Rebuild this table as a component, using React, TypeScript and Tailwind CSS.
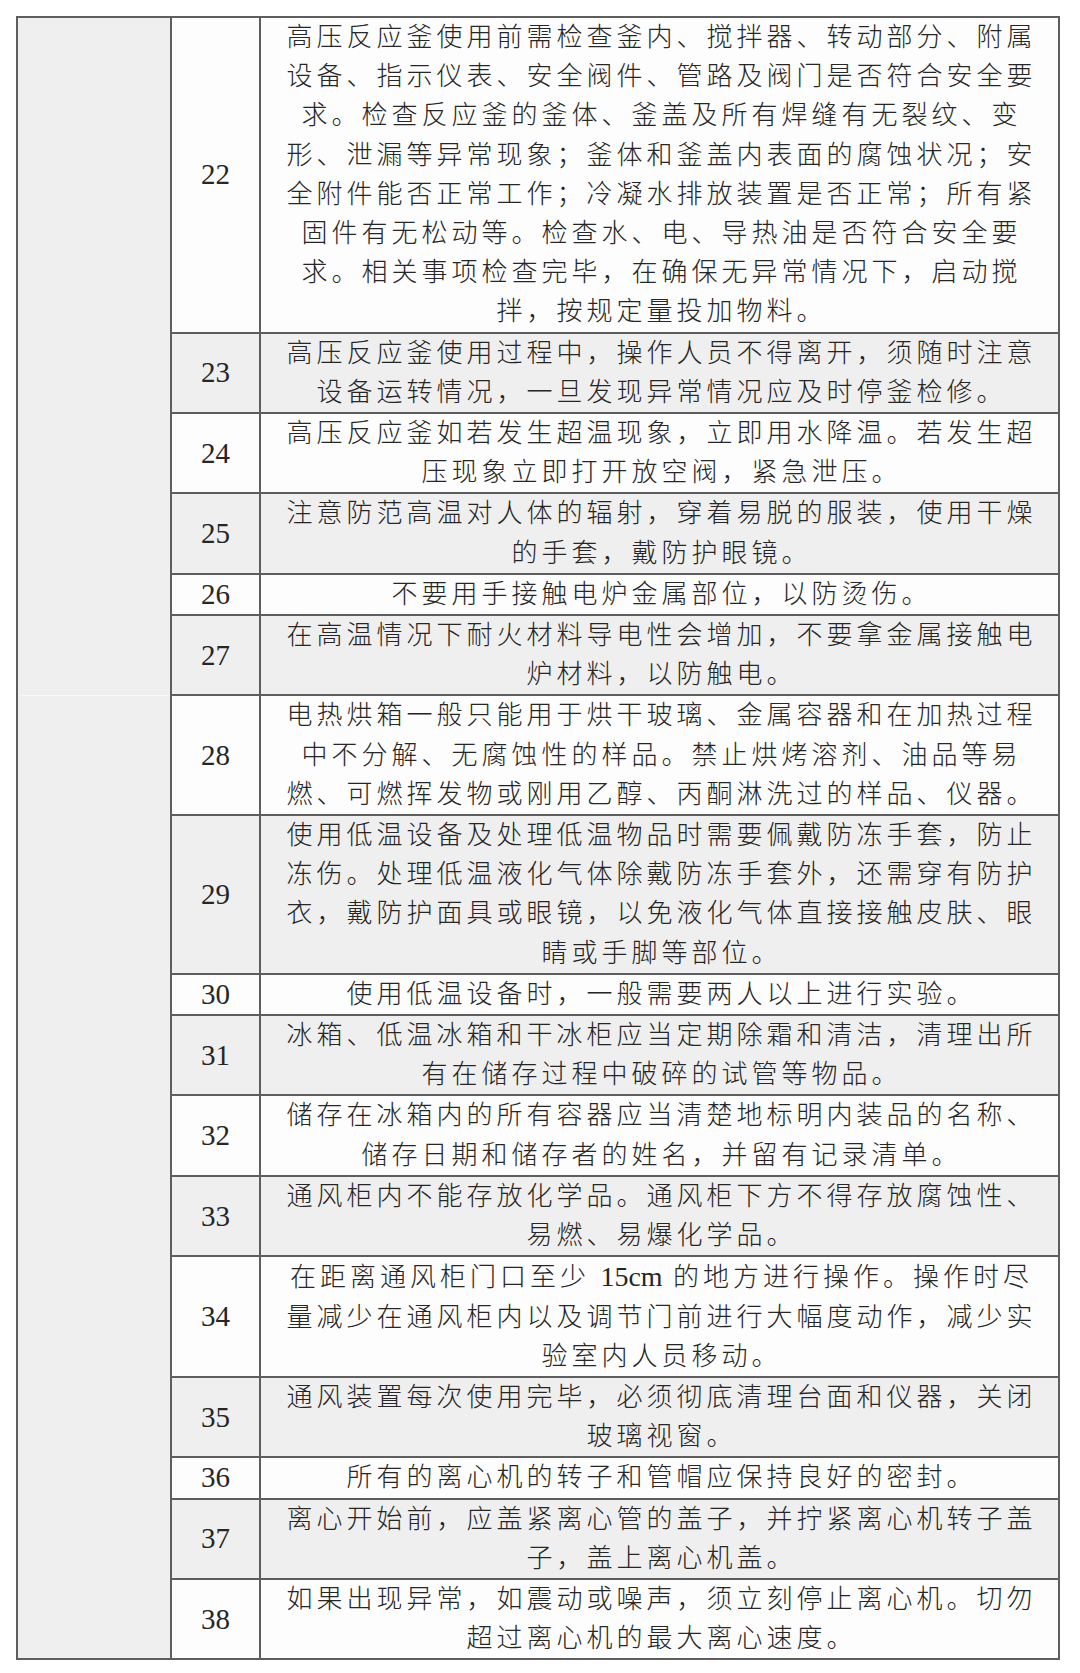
import React from "react";

type Row = {
  no: number;
  lines: React.ReactNode[];
};

const cm = (
  <>
    在距离通风柜门口至少 <span className="text-[28px] tracking-normal">15cm</span> 的地方进行操作。操作时尽
  </>
);

const rows: Row[] = [
  {
    no: 22,
    lines: [
      "高压反应釜使用前需检查釜内、搅拌器、转动部分、附属",
      "设备、指示仪表、安全阀件、管路及阀门是否符合安全要",
      "求。检查反应釜的釜体、釜盖及所有焊缝有无裂纹、变",
      "形、泄漏等异常现象；釜体和釜盖内表面的腐蚀状况；安",
      "全附件能否正常工作；冷凝水排放装置是否正常；所有紧",
      "固件有无松动等。检查水、电、导热油是否符合安全要",
      "求。相关事项检查完毕，在确保无异常情况下，启动搅",
      "拌，按规定量投加物料。",
    ],
  },
  {
    no: 23,
    lines: [
      "高压反应釜使用过程中，操作人员不得离开，须随时注意",
      "设备运转情况，一旦发现异常情况应及时停釜检修。",
    ],
  },
  {
    no: 24,
    lines: [
      "高压反应釜如若发生超温现象，立即用水降温。若发生超",
      "压现象立即打开放空阀，紧急泄压。",
    ],
  },
  {
    no: 25,
    lines: [
      "注意防范高温对人体的辐射，穿着易脱的服装，使用干燥",
      "的手套，戴防护眼镜。",
    ],
  },
  { no: 26, lines: ["不要用手接触电炉金属部位，以防烫伤。"] },
  {
    no: 27,
    lines: [
      "在高温情况下耐火材料导电性会增加，不要拿金属接触电",
      "炉材料，以防触电。",
    ],
  },
  {
    no: 28,
    lines: [
      "电热烘箱一般只能用于烘干玻璃、金属容器和在加热过程",
      "中不分解、无腐蚀性的样品。禁止烘烤溶剂、油品等易",
      "燃、可燃挥发物或刚用乙醇、丙酮淋洗过的样品、仪器。",
    ],
  },
  {
    no: 29,
    lines: [
      "使用低温设备及处理低温物品时需要佩戴防冻手套，防止",
      "冻伤。处理低温液化气体除戴防冻手套外，还需穿有防护",
      "衣，戴防护面具或眼镜，以免液化气体直接接触皮肤、眼",
      "睛或手脚等部位。",
    ],
  },
  { no: 30, lines: ["使用低温设备时，一般需要两人以上进行实验。"] },
  {
    no: 31,
    lines: [
      "冰箱、低温冰箱和干冰柜应当定期除霜和清洁，清理出所",
      "有在储存过程中破碎的试管等物品。",
    ],
  },
  {
    no: 32,
    lines: [
      "储存在冰箱内的所有容器应当清楚地标明内装品的名称、",
      "储存日期和储存者的姓名，并留有记录清单。",
    ],
  },
  {
    no: 33,
    lines: [
      "通风柜内不能存放化学品。通风柜下方不得存放腐蚀性、",
      "易燃、易爆化学品。",
    ],
  },
  {
    no: 34,
    lines: [
      cm,
      "量减少在通风柜内以及调节门前进行大幅度动作，减少实",
      "验室内人员移动。",
    ],
  },
  {
    no: 35,
    lines: [
      "通风装置每次使用完毕，必须彻底清理台面和仪器，关闭",
      "玻璃视窗。",
    ],
  },
  { no: 36, lines: ["所有的离心机的转子和管帽应保持良好的密封。"] },
  {
    no: 37,
    lines: [
      "离心开始前，应盖紧离心管的盖子，并拧紧离心机转子盖",
      "子，盖上离心机盖。",
    ],
  },
  {
    no: 38,
    lines: [
      "如果出现异常，如震动或噪声，须立刻停止离心机。切勿",
      "超过离心机的最大离心速度。",
    ],
  },
];

export default function App() {
  return (
    <div className="min-h-[1673px] w-[1080px] bg-white pt-[16px] pl-[16px] font-['Liberation_Serif','Noto_Sans_CJK_SC',serif] text-[#262626]">
      <table className="w-[1044px] border-collapse">
        <colgroup>
          <col className="w-[154px]" />
          <col className="w-[89px]" />
          <col />
        </colgroup>
        <tbody>
          {rows.map((row, i) => {
            const shade = i % 2 === 1 ? "bg-[#efefef]" : "bg-[#fdfdfd]";
            return (
              <tr key={row.no}>
                {row.no === 22 && (
                  <td
                    rowSpan={6}
                    className="border-2 border-[#5e5e5e] border-b-[1px] border-b-[#f7f7f7] bg-[#efefef]"
                  />
                )}
                {row.no === 28 && (
                  <td
                    rowSpan={11}
                    className="border-2 border-[#5e5e5e] border-t-[1px] border-t-[#f7f7f7] bg-[#efefef]"
                  />
                )}
                <td
                  className={`border-2 border-[#5e5e5e] ${shade} p-0 text-center align-middle text-[29px] leading-none`}
                >
                  {row.no}
                </td>
                <td
                  className={`border-2 border-[#5e5e5e] ${shade} p-0 pl-[4px] text-center align-middle text-[26px] font-light leading-[39.2px] tracking-[4px]`}
                >
                  {row.lines.map((line, j) => (
                    <div key={j} className="whitespace-nowrap">
                      {line}
                    </div>
                  ))}
                </td>
              </tr>
            );
          })}
        </tbody>
      </table>
    </div>
  );
}
